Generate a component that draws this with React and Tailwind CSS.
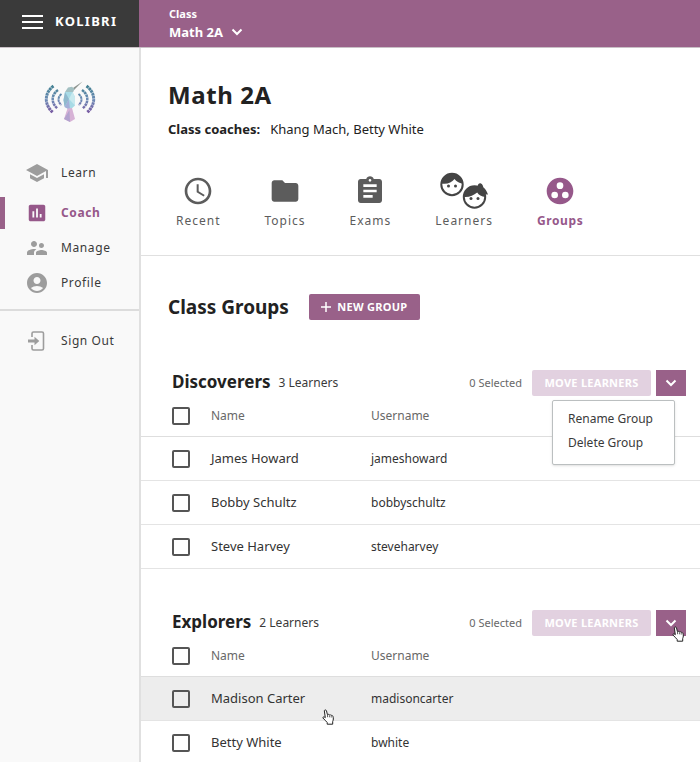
import React from "react";
import {
  MdSchool,
  MdAssessment,
  MdSupervisorAccount,
  MdAccountCircle,
  MdAccessTime,
  MdFolder,
  MdAssignment,
  MdGroupWork,
} from "react-icons/md";

function Chevron({ className }) {
  return (
    <svg viewBox="0 0 12 8" className={className} fill="none" stroke="currentColor" strokeWidth="2" aria-hidden="true">
      <path d="M1.5 1.5 6 6l4.5-4.5" />
    </svg>
  );
}

function DoorIcon({ className }) {
  return (
    <svg viewBox="0 0 24 24" className={className} aria-hidden="true">
      <path d="M7 8V4.5A1.5 1.5 0 0 1 8.500 3H17a1.500 1.500 0 0 1 1.500 1.500v15A1.500 1.500 0 0 1 17 21H8.500A1.500 1.500 0 0 1 7 19.500V16" fill="none" stroke="currentColor" strokeWidth="1.600" />
      <path d="M3 10.500h6.500V7.700l4.800 4.300-4.800 4.300v-2.800H3z" fill="currentColor" />
    </svg>
  );
}

function LearnersIcon({ className }) {
  return (
    <svg viewBox="0 0 50 38" className={className} aria-hidden="true">
      <g fill="none" stroke="currentColor" strokeWidth="2">
        <circle cx="13" cy="12.500" r="10.700" />
        <circle cx="35.500" cy="25" r="10.700" />
      </g>
      <g fill="currentColor">
        <path d="M2.500 11.500C3 5 7.500 1.500 13 1.500S23 5.500 23.500 11.500c-3.500-.5-6-2-8-4.500-3 3.500-7 5.500-13 4.500z" />
        <path d="M25 25c0-7 4.500-11 10-11 1.500 0 2.500.2 3.500.6.4-2.600 1.800-3.800 3.400-3.200 1.400.5 2.100 2 2.400 3.800 1.900 1.400 3.300 3.500 4.700 7.300-1.800 0-2.800-.6-3.300-1.300.5 1.200.8 2.500.8 3.800-4-.5-6.800-2-8.300-4.500C34.500 23.500 30 25.500 25 25z" />
        <circle cx="9.500" cy="14" r="1.500" />
        <circle cx="16.500" cy="14" r="1.500" />
        <circle cx="32" cy="26.500" r="1.500" />
        <circle cx="39" cy="26.500" r="1.500" />
      </g>
    </svg>
  );
}

function KolibriLogo({ className }) {
  return (
    <svg viewBox="0 0 52 44" className={className} role="img" aria-label="Kolibri">
      <defs>
        <linearGradient id="wave" x1="0" y1="5" x2="0" y2="34" gradientUnits="userSpaceOnUse">
          <stop offset="0" stopColor="#3f7f8f" />
          <stop offset="0.5" stopColor="#6c8bb5" />
          <stop offset="1" stopColor="#7a55a0" />
        </linearGradient>
      </defs>
      <g fill="none" stroke="url(#wave)" strokeWidth="3" strokeDasharray="2.600 0.500">
        <path d="M9.500 6C0 13 0 25 9 32.500" />
        <path d="M14 10C7 15 7 23 13.500 28.500" strokeWidth="2.500" />
        <path d="M17.500 14c-4 3-4 8 0 11" strokeWidth="2" />
        <path d="M42.500 6C52 13 52 25 43 32.500" />
        <path d="M38 10C45 15 45 23 38.500 28.500" strokeWidth="2.500" />
        <path d="M34.500 14c4 3 4 8 0 11" strokeWidth="2" />
      </g>
      <path d="m29 8 9.500-6.500L30 10z" fill="#8d948f" />
      <path d="m21 12 3-4.500 4-.7 2.500 2.200-2 4.500-5 .5z" fill="#a3c0c2" />
      <path d="m21 12-1.500 8 1.500 7 5 3 5-4.500V17l-2.500-5z" fill="#a8dbe6" />
      <path d="m21 12 4 7-4.500 8-1-7z" fill="#8fb9cd" />
      <path d="m28.500 12 2.500 5v8.500L25 19z" fill="#c7e9ee" />
      <path d="m20.500 27 4.500-8 1 11z" fill="#a3b0d8" />
      <path d="m23.500 28.500 4.500-.5 3 11-5 3-6-3z" fill="#d7b3d6" />
      <path d="m25.500 30 .5 12-6-3z" fill="#b3a3cf" />
    </svg>
  );
}

function HandCursor({ className }) {
  return (
    <svg viewBox="0 0 12 16" className={className} aria-hidden="true">
      <path
        d="M2.300 1.600c.7-1 1.900-.8 2.200.3l.9 3.700c.8-.5 1.500-.3 1.900.3.800-.4 1.500-.1 1.800.5.900-.3 1.700.2 1.900 1.100.5 1.800.5 3.200-.3 5v2.700H5.200v-1.700C3.700 12 2.600 10.500.8 8.900c.1-1.200 1.400-1.400 2.500-.2z"
        fill="#fff"
        stroke="#222"
        strokeWidth="1"
        strokeLinejoin="round"
      />
      <path d="M5.500 6v2.200M7.400 6.300v2M9.200 7v1.600" stroke="#222" strokeWidth="0.700" />
    </svg>
  );
}

const navItems = [
  { label: "Learn", icon: MdSchool },
  { label: "Coach", icon: MdAssessment, active: true },
  { label: "Manage", icon: MdSupervisorAccount },
  { label: "Profile", icon: MdAccountCircle },
];

const tabs = [
  { label: "Recent", icon: MdAccessTime },
  { label: "Topics", icon: MdFolder },
  { label: "Exams", icon: MdAssignment },
  { label: "Learners", icon: LearnersIcon, wide: true },
  { label: "Groups", icon: MdGroupWork, active: true },
];

const groups = [
  {
    name: "Discoverers",
    menuOpen: true,
    learners: [
      { name: "James Howard", username: "jameshoward" },
      { name: "Bobby Schultz", username: "bobbyschultz" },
      { name: "Steve Harvey", username: "steveharvey" },
    ],
  },
  {
    name: "Explorers",
    pointer: true,
    learners: [
      { name: "Madison Carter", username: "madisoncarter", hovered: true },
      { name: "Betty White", username: "bwhite" },
    ],
  },
];

function NavLink({ label, icon: Icon, active }) {
  return (
    <a
      href="#"
      aria-current={active ? "page" : undefined}
      className={
        active
          ? "flex h-8 items-center gap-3 border-l-5 border-[#996189] pl-5 text-xs font-bold tracking-wider text-[#96588a]"
          : "flex h-8 items-center gap-3 pl-[25px] text-xs tracking-wider text-[#3a3a3a]"
      }
    >
      <Icon className={active ? "size-6 p-px" : "size-6 text-[#9d9d9d]"} />
      {label}
    </a>
  );
}

function Checkbox({ label }) {
  return (
    <input
      type="checkbox"
      aria-label={label}
      className="block size-[18px] appearance-none rounded-xs border-2 border-[#555] checked:bg-[#996189]"
    />
  );
}

function Group({ group }) {
  return (
    <section>
      <div className="flex h-[26px] items-center pr-3.5 pl-[31px]">
        <h3 className="-mt-0.5 text-[17px] font-bold text-[#222]">{group.name}</h3>
        <span className="ml-2 text-xs text-[#3a3a3a]">{group.learners.length} Learners</span>
        <span className="ml-auto text-[11px] text-[#686868]">0 Selected</span>
        <button disabled className="ml-2.5 h-[26px] w-[119px] rounded-xs bg-[#e2d1e0] text-[11px] font-bold tracking-wide text-white">
          MOVE LEARNERS
        </button>
        <div className="relative ml-[5px]">
          <button
            aria-label={group.name + " options"}
            aria-expanded={Boolean(group.menuOpen)}
            className="flex h-[26px] w-[30px] items-center justify-center bg-[#996189] text-white"
          >
            <Chevron className="h-2 w-3" />
          </button>
          {group.menuOpen && (
            <ul className="absolute top-[30px] right-[11px] z-10 h-[65px] w-[123px] rounded-xs border border-[#bbbfc0] bg-white pt-1.5 pl-[15px] text-xs text-[#3a3a3a] shadow-sm">
              <li>
                <button className="h-6">Rename Group</button>
              </li>
              <li>
                <button className="h-6">Delete Group</button>
              </li>
            </ul>
          )}
          {group.pointer && <HandCursor className="absolute top-4 left-4 h-4 w-3" />}
        </div>
      </div>
      <table className="w-full table-fixed border-separate border-spacing-0 text-left">
        <colgroup>
          <col className="w-[70px]" />
          <col className="w-40" />
          <col />
        </colgroup>
        <thead>
          <tr className="h-[41px] text-xs text-[#686868]">
            <th className="border-b border-[#dedede] pl-[31px]">
              <Checkbox label={"Select all " + group.name} />
            </th>
            <th className="border-b border-[#dedede] font-normal">Name</th>
            <th className="border-b border-[#dedede] font-normal">Username</th>
          </tr>
        </thead>
        <tbody>
          {group.learners.map((l) => (
            <tr key={l.username} className={l.hovered ? "h-11 bg-[#ededed]" : "h-11"}>
              <td className="border-b border-[#e4e4e4] pl-[31px]">
                <Checkbox label={"Select " + l.name} />
              </td>
              <td className="relative border-b border-[#e4e4e4] text-[13px] text-[#333]">
                {l.name}
                {l.hovered && <HandCursor className="absolute top-8 left-[111px] h-4 w-3" />}
              </td>
              <td className="border-b border-[#e4e4e4] text-xs text-[#333]">{l.username}</td>
            </tr>
          ))}
        </tbody>
      </table>
    </section>
  );
}

export default function App() {
  return (
    <div className="flex h-screen flex-col bg-white font-['Noto_Sans',sans-serif]">
      <header className="flex h-12 shrink-0 border-b border-[#c9c0c6] text-white">
        <div className="flex w-[139px] items-center gap-3 bg-[#3a3a3a] pb-1 pl-[22px]">
          <button aria-label="Menu" className="flex h-3.5 w-[21px] flex-col justify-between">
            <span className="h-0.5 w-full bg-white" />
            <span className="h-0.5 w-full bg-white" />
            <span className="h-0.5 w-full bg-white" />
          </button>
          <span className="text-[13px] font-bold tracking-widest">KOLIBRI</span>
        </div>
        <div className="flex flex-1 flex-col justify-center bg-[#996189] pl-[30px]">
          <span className="text-[11px] leading-4 font-bold">Class</span>
          <button className="flex items-center gap-2 text-[13px] leading-5 font-bold">
            Math 2A
            <Chevron className="h-2 w-3" />
          </button>
        </div>
      </header>

      <div className="flex min-h-0 flex-1">
        <aside className="w-[141px] shrink-0 border-r-2 border-[#e0e0e0] bg-[#f9f9f9]">
          <KolibriLogo className="mx-auto mt-8 h-11 w-[52px]" />
          <nav className="mt-[33px]">
            <ul className="flex flex-col gap-[3px]">
              {navItems.map((item) => (
                <li key={item.label} className={item.active ? "mt-[5px]" : ""}>
                  <NavLink {...item} />
                </li>
              ))}
            </ul>
            <div className="mt-2.5 border-t-2 border-[#dcdcdc] pt-3.5">
              <NavLink label="Sign Out" icon={DoorIcon} />
            </div>
          </nav>
        </aside>

        <main className="min-w-0 flex-1 overflow-y-auto [scrollbar-width:none]">
          <div className="border-b border-[#e0e0e0] pt-[29px] pb-6 pl-[27px]">
            <h1 className="text-2xl leading-9 font-bold tracking-wide text-[#222]">Math 2A</h1>
            <p className="mt-1.5 text-[13px] leading-5 text-[#222]">
              <strong className="mr-2.5 font-bold">Class coaches:</strong>
              Khang Mach, Betty White
            </p>
            <nav className="mt-8 flex gap-11 pl-2">
              {tabs.map(({ label, icon: Icon, active, wide }) => (
                <a
                  key={label}
                  href="#"
                  aria-current={active ? "page" : undefined}
                  className={
                    active
                      ? "flex flex-col items-center text-xs leading-5 font-bold tracking-wider text-[#96588a]"
                      : "flex flex-col items-center text-xs leading-5 tracking-[1px] text-[#5c5c5c]"
                  }
                >
                  <span className="flex h-10 items-center">
                    <Icon className={wide ? "h-[38px] w-[50px] text-[#444]" : "size-8"} />
                  </span>
                  {label}
                </a>
              ))}
            </nav>
          </div>

          <div className="flex items-center gap-5 pt-[38px] pl-[27px]">
            <h2 className="text-[19px] leading-[26px] font-bold text-[#222]">Class Groups</h2>
            <button className="flex h-[26px] w-[111px] items-center justify-center gap-1.5 rounded-xs bg-[#996189] text-[11px] font-bold tracking-wide text-white">
              <svg viewBox="0 0 10 10" className="size-2.5" stroke="currentColor" strokeWidth="1.500" aria-hidden="true">
                <path d="M5 0v10M0 5h10" />
              </svg>
              NEW GROUP
            </button>
          </div>

          <div className="mt-[50px] flex flex-col gap-[41px]">
            {groups.map((group) => (
              <Group key={group.name} group={group} />
            ))}
          </div>
        </main>
      </div>
    </div>
  );
}
